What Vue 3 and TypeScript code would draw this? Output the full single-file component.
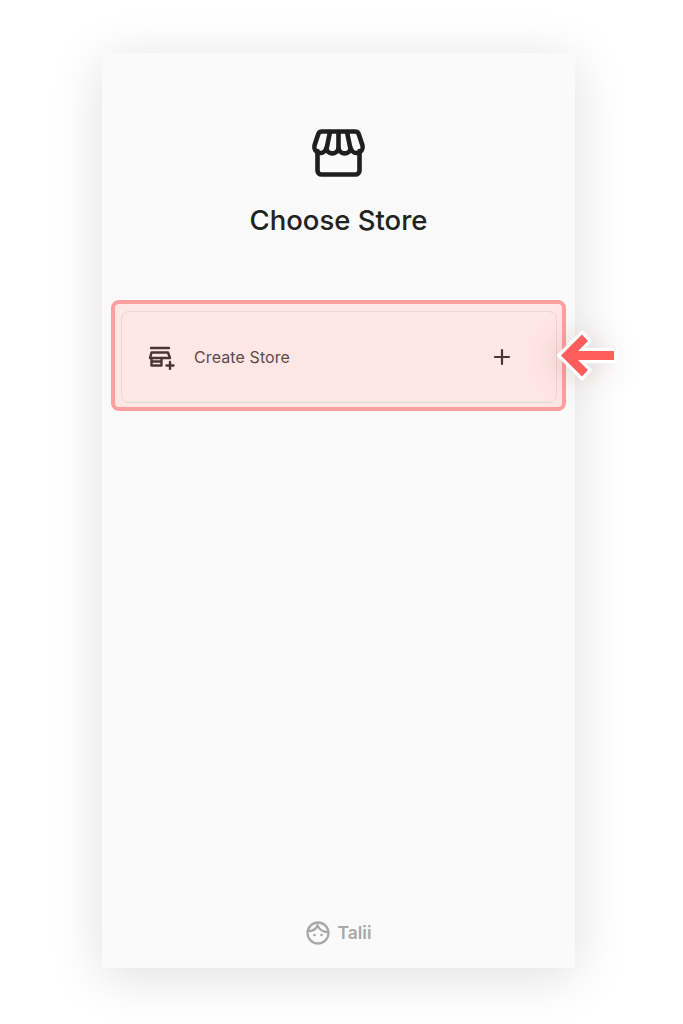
<script setup lang="ts">
const brandName = "Talii";
</script>

<template>
  <div class="page">
    <main class="panel">
      <header class="head">
        <svg class="store-icon" width="56" height="52" viewBox="0 0 56 52" fill="none" stroke="#1f1f1f" stroke-width="4.600" stroke-linejoin="round" stroke-linecap="round">
          <path d="M6.500 24v19.500a4 4 0 0 0 4 4h34a4 4 0 0 0 4-4V24" />
          <path d="M11 4.500h33a4 4 0 0 1 3.800 2.800l3.700 11.200a6 6 0 0 1-11.700 2.900 6.300 6.300 0 0 1-12.300 0 6.300 6.300 0 0 1-12.300 0A6 6 0 0 1 3.500 18.500L7.200 7.300A4 4 0 0 1 11 4.500Z" />
          <path d="M15.700 21 19 5M27.500 21V5M39.300 21 36 5" />
        </svg>
        <h1 class="title">Choose Store</h1>
      </header>

      <div class="highlight">
        <button class="row" type="button">
          <svg class="row-icon" width="27" height="25" viewBox="0 0 27 25" fill="none" stroke="#4a3535" stroke-width="2.400" stroke-linecap="round" stroke-linejoin="round">
            <path d="M3 3h18" />
            <path d="M3.500 7.500h16.500L22 13H2Z" />
            <path d="M3.500 13v7.500h10V13M3.500 16.500h10" />
            <path d="M22 17v7M18.500 20.500h7" />
          </svg>
          <span class="row-label">Create Store</span>
          <svg class="plus" width="18" height="18" viewBox="0 0 18 18" stroke="#4a3535" stroke-width="2.200" stroke-linecap="round">
            <path d="M9 2v14M2 9h14" />
          </svg>
        </button>
        <svg class="pointer" width="66" height="56" viewBox="0 0 66 56">
          <path d="M8 27.500 29 6.500 35 13 25 23H61v9H25l10 10-6 6.500Z" fill="#ff5c5c" stroke="#fff" stroke-width="6.500" stroke-linejoin="miter" paint-order="stroke" />
        </svg>
      </div>

      <footer class="brand">
        <svg width="24" height="24" viewBox="0 0 24 24" fill="none" stroke="#a8a8a8" stroke-width="2.300" stroke-linecap="round">
          <circle cx="12" cy="12" r="10.500" />
          <path d="M3 10c3.500 0 7-2 8.500-5.500 2 4 5 6.500 10 6.500" />
          <circle cx="8.500" cy="14" r="1.300" fill="#a8a8a8" stroke="none" />
          <circle cx="15.500" cy="14" r="1.300" fill="#a8a8a8" stroke="none" />
        </svg>
        <span>{{ brandName }}</span>
      </footer>
    </main>
  </div>
</template>

<style scoped>
.page {
  width: 683px;
  height: 1024px;
  box-sizing: border-box;
  padding: 53px 108px 56px 102px;
  background: #fff;
  overflow: hidden;
  font-family: Inter, "Liberation Sans", sans-serif;
}

.panel {
  height: 100%;
  display: flex;
  flex-direction: column;
  background: #fafafa;
  box-shadow: 0 8px 50px rgba(0, 0, 0, 0.13);
}

.head {
  display: flex;
  flex-direction: column;
  align-items: center;
  padding-top: 74px;
}

.store-icon {
  display: block;
}

.title {
  margin: 23px 0 0;
  font-size: 27.500px;
  line-height: 36px;
  font-weight: 500;
  color: #222;
}

.highlight {
  position: relative;
  margin: 62px 9px 0;
  padding: 7px 5px 4px 6px;
  border: 4px solid #ffa09e;
  border-radius: 8px;
  background: #ffe7e5;
}

.row {
  width: 100%;
  height: 92px;
  display: flex;
  align-items: center;
  box-sizing: border-box;
  padding: 0 45px 0 26px;
  border: 1px solid #ebd5d3;
  border-radius: 8px;
  background: transparent;
  font: inherit;
}

.row-icon {
  flex: none;
}

.row-label {
  flex: 1;
  margin-left: 19px;
  text-align: left;
  font-size: 16px;
  letter-spacing: 0.1px;
  color: #5f4a4a;
}

.pointer {
  position: absolute;
  top: 24px;
  right: -57px;
  filter: drop-shadow(-6px 2px 16px rgba(120, 40, 40, 0.2));
}

.brand {
  margin-top: auto;
  height: 47px;
  display: flex;
  align-items: flex-start;
  justify-content: center;
  gap: 7px;
  padding-left: 1px;
  font-size: 17.500px;
  line-height: 24px;
  font-weight: 600;
  color: #a8a8a8;
}
</style>
